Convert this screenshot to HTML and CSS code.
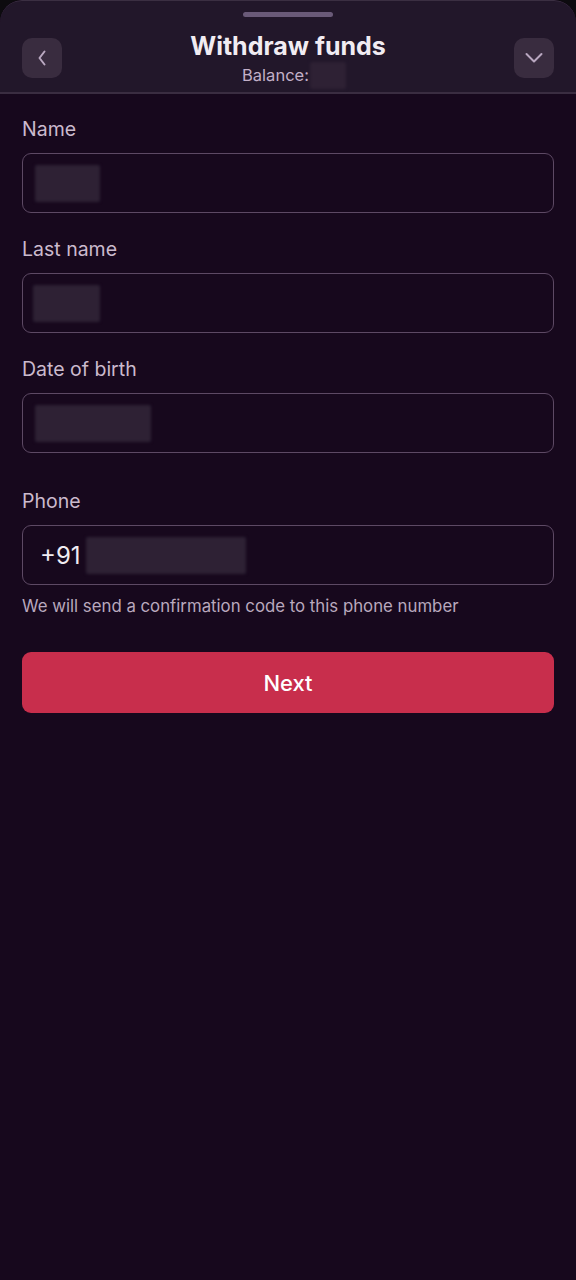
FILE: index.html
```html
<!DOCTYPE html>
<html>
<head>
    <title>Withdraw funds</title>
    <link rel="stylesheet" href="styles.css">
</head>
<body>
    <div class="sheet">
        <div class="sheet-header">
            <div class="handle"></div>
            <div class="header-row">
                <button class="icon-btn" aria-label="Back">
                    <svg width="20" height="20" viewBox="0 0 20 20"><path d="M12.5 3.5 L7.5 10 L12.5 16.5" fill="none" stroke="#b9a7c0" stroke-width="2" stroke-linecap="round" stroke-linejoin="round"/></svg>
                </button>
                <div class="title-block">
                    <div class="title">Withdraw funds</div>
                    <div class="balance">Balance:<span class="hidden-value balance-value"></span></div>
                </div>
                <button class="icon-btn" aria-label="Collapse">
                    <svg width="20" height="20" viewBox="0 0 20 20"><path d="M2.5 6 L10 13.5 L17.5 6" fill="none" stroke="#b9a7c0" stroke-width="2" stroke-linecap="round" stroke-linejoin="round"/></svg>
                </button>
            </div>
        </div>

        <form class="form" onsubmit="return false">
            <div class="field">
                <label class="label">Name</label>
                <div class="input"><span class="hidden-value" style="width: 65px"></span></div>
            </div>
            <div class="field">
                <label class="label">Last name</label>
                <div class="input"><span class="hidden-value" style="width: 67px; margin-left: -2px"></span></div>
            </div>
            <div class="field">
                <label class="label">Date of birth</label>
                <div class="input"><span class="hidden-value" style="width: 116px"></span></div>
            </div>
            <div class="field phone-field">
                <label class="label">Phone</label>
                <div class="input phone-input">
                    <span class="prefix">+91</span>
                    <span class="hidden-value" style="width: 160px"></span>
                </div>
                <p class="hint">We will send a confirmation code to this phone number</p>
            </div>
            <button class="next-btn">Next</button>
        </form>
    </div>
</body>
</html>
```

FILE: styles.css
```css
body { margin: 0; background: #0d0b0f; font-family: Inter, "Noto Sans", sans-serif; }
.sheet { min-height: 1280px; background: #17081d; border-radius: 22px 22px 0 0; overflow: hidden; }

/* header */
.sheet-header { background: #22172a; padding: 11px 22px 7px; border-bottom: 2px solid #3a2d41; border-top: 1px solid #3b2f42; border-radius: 22px 22px 0 0; }
.handle { width: 90px; height: 5px; border-radius: 3px; background: #6a5a78; margin: 0 auto; }
.header-row { display: flex; align-items: center; justify-content: space-between; margin-top: 14px; }
.icon-btn { width: 40px; height: 40px; border: none; border-radius: 10px; background: #392c3f; display: flex; align-items: center; justify-content: center; padding: 0; cursor: pointer; }
.title-block { display: flex; flex-direction: column; align-items: center; gap: 4px; }
.title { font-size: 25px; line-height: 30px; font-weight: 700; color: #f1ecf2; }
.balance { font-size: 16.5px; line-height: 20px; height: 20px; color: #c2b0c8; display: flex; align-items: center; padding-left: 12px; }

.hidden-value { display: inline-block; height: 37px; background: #2e2134; filter: blur(1.5px); border-radius: 2px; }
.balance-value { width: 36px; height: 27px; margin: 0 0 0 1px; }

/* form */
.form { padding: 23px 22px 0; display: flex; flex-direction: column; }
.field { display: flex; flex-direction: column; margin-bottom: 24px; }
.phone-field { margin-top: 12px; margin-bottom: 0; }
.label { font-size: 19.5px; line-height: 24px; color: #cbbacd; margin-bottom: 12px; }
.input { height: 58px; border: 1px solid #5d4964; border-radius: 9px; display: flex; align-items: center; padding: 0 12px; }
.prefix { font-size: 24px; color: #f1ecf2; margin: 0 5px 0 5px; }
.hint { font-size: 16.8px; line-height: 20px; color: #b9a8bd; margin: 11px 0 0; }
.next-btn { margin-top: 36px; height: 61px; border: none; border-radius: 9px; background: #c82e4c; color: #fff; font-family: Inter, "Noto Sans", sans-serif; font-size: 22px; font-weight: 500; cursor: pointer; }
```
